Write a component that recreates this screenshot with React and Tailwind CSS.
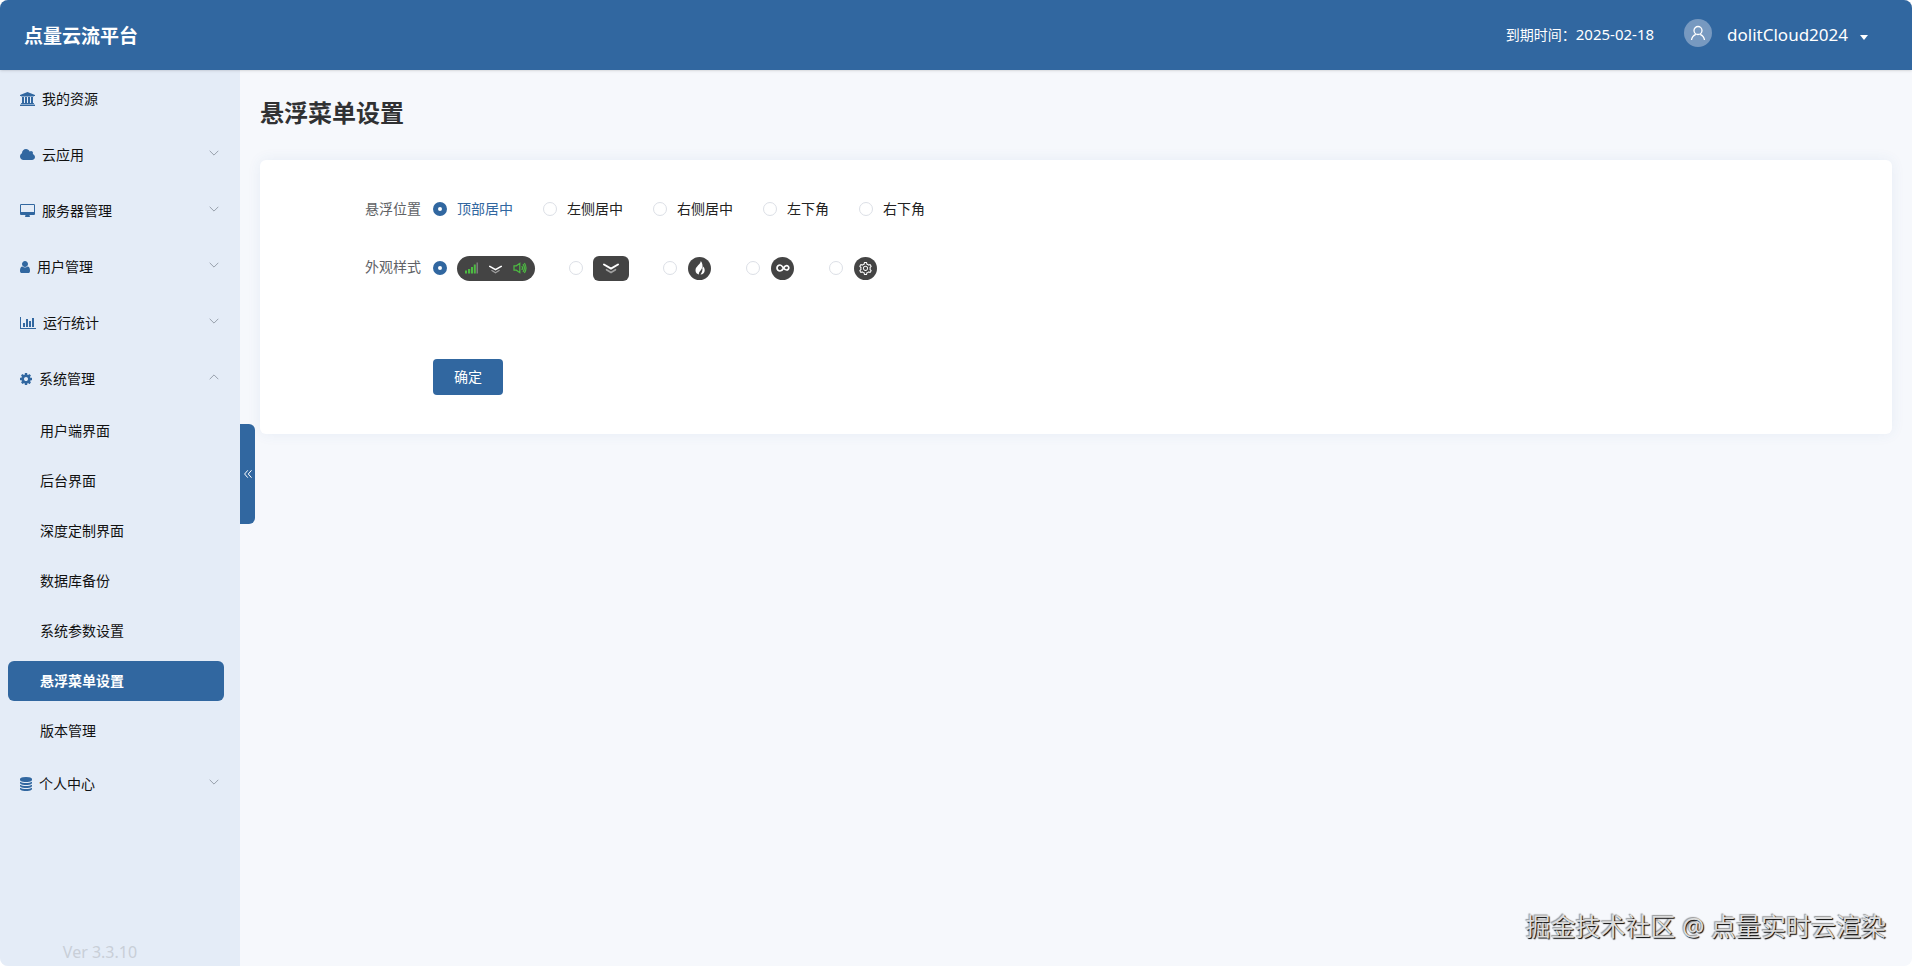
import { useState } from "react";
import { AiOutlineSetting } from "react-icons/ai";

const icons = {
  bank: {
    box: "0 0 1920 1792",
    size: "w-[15px]",
    d: "M960 0l960 384v128h-128q0 26-20.5 45t-48.5 19h-1526q-28 0-48.5-19t-20.5-45h-128v-128zm-704 640h256v768h128v-768h256v768h128v-768h256v768h128v-768h256v768h59q28 0 48.5 19t20.5 45v64h-1664v-64q0-26 20.5-45t48.5-19h59v-768zm1595 960q28 0 48.5 19t20.5 45v128h-1920v-128q0-26 20.5-45t48.5-19h1782z",
  },
  cloud: {
    box: "64 0 1920 1792",
    size: "w-[15px]",
    d: "M1984 1152q0 159-112.5 271.5t-271.5 112.5h-1088q-185 0-316.5-131.5t-131.5-316.5q0-132 71-241.5t187-163.5q-2-28-2-43 0-212 150-362t362-150q158 0 286.5 88t187.5 230q70-62 166-62 106 0 181 75t75 181q0 75-41 138 129 30 213 134.5t84 239.5z",
  },
  desktop: {
    box: "0 0 1920 1792",
    size: "w-[15px]",
    d: "M1792 992v-832q0-13-9.5-22.5t-22.5-9.5h-1600q-13 0-22.5 9.5t-9.5 22.5v832q0 13 9.5 22.5t22.5 9.5h1600q13 0 22.5-9.5t9.5-22.5zm128-832v1088q0 66-47 113t-113 47h-544q0 37 16 77.5t32 71 16 43.5q0 26-19 45t-45 19h-512q-26 0-45-19t-19-45q0-14 16-44t32-70 16-78h-544q-66 0-113-47t-47-113v-1088q0-66 47-113t113-47h1600q66 0 113 47t47 113z",
  },
  user: {
    box: "256 0 1280 1792",
    size: "w-2.5",
    d: "M1536 1399q0 109-62.5 187t-150.5 78h-854q-88 0-150.5-78t-62.5-187q0-85 8.5-160.5t31.5-152 58.5-131 94-89 134.5-34.5q131 128 313 128t313-128q76 0 134.5 34.5t94 89 58.5 131 31.5 152 8.5 160.5zm-256-887q0 159-112.5 271.5t-271.5 112.5-271.5-112.5-112.5-271.5 112.5-271.5 271.5-112.5 271.5 112.5 112.5 271.5z",
  },
  chart: {
    box: "0 0 2048 1792",
    size: "w-4",
    d: "M640 896v512h-256v-512h256zm384-512v1024h-256v-1024h256zm1024 1152v128h-2048v-1536h128v1408h1920zm-640-896v768h-256v-768h256zm384-384v1152h-256v-1152h256z",
  },
  cog: {
    box: "128 0 1536 1792",
    size: "w-3",
    d: "M1152 896q0-106-75-181t-181-75-181 75-75 181 75 181 181 75 181-75 75-181zm512-109v222q0 12-8 23t-20 13l-185 28q-19 54-39 91 35 50 107 138 10 12 10 25t-9 23q-27 37-99 108t-94 71q-12 0-26-9l-138-108q-44 23-91 38-16 136-29 186-7 28-36 28h-222q-14 0-24.5-8.5t-11.5-21.5l-28-184q-49-16-90-37l-141 107q-10 9-25 9-14 0-25-11-126-114-165-168-7-10-7-23 0-12 8-23 15-21 51-66.5t54-70.5q-27-50-41-99l-183-27q-13-2-21-12.5t-8-23.5v-222q0-12 8-23t19-13l186-28q14-46 39-92-40-57-107-138-10-12-10-24 0-10 9-23 26-36 98.5-107.5t94.5-71.5q13 0 26 10l138 107q44-23 91-38 16-136 29-186 7-28 36-28h222q14 0 24.5 8.5t11.5 21.5l28 184q49 16 90 37l142-107q9-9 24-9 13 0 25 10 129 119 165 170 7 8 7 22 0 12-8 23-15 21-51 66.5t-54 70.5q26 50 41 98l183 28q13 2 21 12.5t8 23.5z",
  },
  database: {
    box: "128 0 1536 1792",
    size: "w-3",
    d: "M896 768q237 0 443-43t325-127v170q0 69-103 128t-280 93.5-385 34.5-385-34.5-280-93.5-103-128v-170q119 84 325 127t443 43zm0 768q237 0 443-43t325-127v170q0 69-103 128t-280 93.5-385 34.5-385-34.5-280-93.5-103-128v-170q119 84 325 127t443 43zm0-384q237 0 443-43t325-127v170q0 69-103 128t-280 93.5-385 34.5-385-34.5-280-93.5-103-128v-170q119 84 325 127t443 43zm0-1152q208 0 385 34.5t280 93.5 103 128v128q0 69-103 128t-280 93.5-385 34.5-385-34.5-280-93.5-103-128v-128q0-69 103-128t280-93.5 385-34.5z",
  },
};

const menu = [
  { icon: "bank", label: "我的资源" },
  { icon: "cloud", label: "云应用", children: [] },
  { icon: "desktop", label: "服务器管理", children: [] },
  { icon: "user", label: "用户管理", children: [] },
  { icon: "chart", label: "运行统计", children: [] },
  {
    icon: "cog",
    label: "系统管理",
    children: ["用户端界面", "后台界面", "深度定制界面", "数据库备份", "系统参数设置", "悬浮菜单设置", "版本管理"],
  },
  { icon: "database", label: "个人中心", children: [] },
];

const positions = ["顶部居中", "左侧居中", "右侧居中", "左下角", "右下角"];

function MenuIcon({ name }) {
  const icon = icons[name];
  return (
    <svg viewBox={icon.box} className={`h-3.5 shrink-0 fill-[#3167a0] ${icon.size}`} aria-hidden="true">
      <path d={icon.d} />
    </svg>
  );
}

function Arrow({ open }) {
  return (
    <svg viewBox="0 0 10 6" className="mb-1 ml-auto h-1.5 w-2.5 fill-none stroke-[#8f97a3]" aria-hidden="true">
      <path d={open ? "M.7 5.2L5 .9l4.3 4.3" : "M.7 .8L5 5.1l4.3-4.3"} strokeWidth="0.9" />
    </svg>
  );
}

function DoubleChevron({ className }) {
  return (
    <svg viewBox="0 0 16 12" className={`fill-none ${className}`} aria-hidden="true">
      <path d="M1 1.5l7 4 7-4" stroke="#fff" strokeWidth="2" strokeLinecap="round" />
      <path d="M3.5 6.7l4.5 2.8 4.5-2.8" stroke="#a0a0a0" strokeWidth="1.6" strokeLinecap="round" />
    </svg>
  );
}

function BarPreview() {
  return (
    <span className="flex h-[25px] w-[78px] items-center justify-between rounded-full bg-[#444] px-2">
      <svg viewBox="0 0 13 12" className="h-3 w-[13px] fill-[#4dbb42]" aria-hidden="true">
        <path d="M0 8.5h2v3H0zM3 7h2.2v4.500H3zM6 5h2v6.500H6zM8.800 2.500h2v9h-2z" />
        <path d="M11.5 .5H13v11h-1.500z" fill="#7b7b7b" />
      </svg>
      <DoubleChevron className="mt-1 h-2.5 w-[13px]" />
      <svg viewBox="0 0 14 12" className="h-3 w-3.5 fill-none stroke-[#4dbb42]" strokeWidth="1.2" aria-hidden="true">
        <path d="M1 3.8h2.3L6.8 1.3v9.4L3.3 8.2H1z" />
        <path d="M8.8 4q1.4 2 0 4M10 2.2q2.8 3.8 0 7.6M11.4 1q3.2 5 0 10" />
      </svg>
    </span>
  );
}

function SquarePreview() {
  return (
    <span className="flex h-[25px] w-9 items-center justify-center rounded-md bg-[#444]">
      <DoubleChevron className="mt-0.5 h-3 w-4" />
    </span>
  );
}

function RoundPreview({ children }) {
  return (
    <span className="flex w-[25px] justify-center">
      <span className="flex size-[23px] items-center justify-center rounded-full bg-[#444]">{children}</span>
    </span>
  );
}

const styles = [
  { label: "状态栏", preview: <BarPreview /> },
  { label: "下拉", preview: <SquarePreview /> },
  {
    label: "火焰",
    preview: (
      <RoundPreview>
        <svg viewBox="0 0 14 14" className="size-3.5" aria-hidden="true">
          <path d="M7.8 0C7.9 3 2.500 5.300 2.500 9.300c0 2.500 1.600 4 3.600 4.300-1-2.600 2.400-4 3.100-7.100.9 2.700-.3 5.200-1.700 7.100 2.600-.2 4.200-2 4.200-4.400 0-1.700-.6-2.800-1.300-3.800-.1.800-.4 1.300-.9 1.700C9.800 4.500 9.400 1.700 7.800 0z" fill="#fff" />
        </svg>
      </RoundPreview>
    ),
  },
  {
    label: "无限",
    preview: (
      <RoundPreview>
        <svg viewBox="0 0 14 8" className="h-2 w-3.5 fill-none" aria-hidden="true">
          <path d="M7.3 4.5C6.5 6 5.5 7 4 7a3 3 0 1 1 0-6c2.7 0 3.6 5 6.6 5a2.2 2.2 0 1 0 0-4.4C9 1.6 8.2 3 7.3 4.5z" stroke="#fff" strokeWidth="1.7" />
        </svg>
      </RoundPreview>
    ),
  },
  {
    label: "齿轮",
    preview: (
      <RoundPreview>
        <AiOutlineSetting className="size-[15px] text-white" aria-hidden="true" />
      </RoundPreview>
    ),
  },
];

function Radio({ name, checked, onChange, label, children }) {
  return (
    <label className="flex cursor-pointer items-center gap-2.5">
      <input
        type="radio"
        name={name}
        checked={checked}
        onChange={onChange}
        aria-label={label}
        className="size-3.5 appearance-none rounded-full border border-[#dcdfe6] bg-white checked:border-5 checked:border-[#3167a0]"
      />
      {children}
    </label>
  );
}

function Header() {
  return (
    <header className="z-10 flex h-[70px] items-center bg-[#3167a0] px-6 text-white shadow-sm">
      <h1 className="pt-0.5 text-[19px] font-bold">点量云流平台</h1>
      <span className="ml-auto text-sm">
        到期时间：<span className="text-[15px]">2025-02-18</span>
      </span>
      <button type="button" className="mr-5 ml-[30px] flex items-center text-[17px]">
        <span className="mr-[15px] mb-1 flex size-7 items-center justify-center rounded-full bg-[#7799c0]">
          <svg viewBox="0 0 16 16" className="size-4 fill-none stroke-white" strokeWidth="1.3" aria-hidden="true">
            <circle cx="8" cy="5.5" r="4" />
            <path d="M1.5 15c.4-3 2-4.7 4.3-5.7M14.5 15c-.4-3-2-4.7-4.3-5.7" />
          </svg>
        </span>
        dolitCloud2024
        <svg viewBox="0 0 8 5" className="mt-1 ml-3 h-[5px] w-2 fill-white" aria-hidden="true">
          <path d="M0 0h8L4 5z" />
        </svg>
      </button>
    </header>
  );
}

function Sidebar() {
  const [open, setOpen] = useState("系统管理");
  const [active, setActive] = useState("悬浮菜单设置");

  return (
    <aside className="relative flex w-60 shrink-0 flex-col bg-[#e4ecf7]">
      <nav className="pt-px text-sm text-[#111]">
        {menu.map((item) => (
          <div key={item.label}>
            {item.children ? (
              <button
                type="button"
                aria-expanded={open === item.label}
                onClick={() => setOpen(open === item.label ? "" : item.label)}
                className="flex h-14 w-full items-center gap-[7px] pr-[21px] pl-5"
              >
                <MenuIcon name={item.icon} />
                {item.label}
                <Arrow open={open === item.label} />
              </button>
            ) : (
              <a href="#" className="flex h-14 items-center gap-[7px] px-5">
                <MenuIcon name={item.icon} />
                {item.label}
              </a>
            )}
            {open === item.label && item.children?.length > 0 && (
              <div className="flex flex-col gap-2.5 pt-1 pr-4 pb-[5px] pl-2">
                {item.children.map((child) => (
                  <a
                    key={child}
                    href="#"
                    onClick={() => setActive(child)}
                    className={`flex h-10 items-center rounded-md pl-8 ${
                      active === child ? "bg-[#3167a0] font-bold text-white" : ""
                    }`}
                  >
                    {child}
                  </a>
                ))}
              </div>
            )}
          </div>
        ))}
      </nav>
      <p className="mt-auto pr-10 text-center text-base leading-7 text-[#c9cfd8]">Ver 3.3.10</p>
      <button
        type="button"
        aria-label="收起菜单"
        className="absolute top-[354px] left-full flex h-[100px] w-[15px] items-center justify-center rounded-r-md bg-[#3167a0]"
      >
        <svg viewBox="0 0 8 8" className="size-2 fill-none stroke-white" strokeWidth="1" aria-hidden="true">
          <path d="M3.8 .3L.6 4l3.2 3.7M7.5 .3L4.3 4l3.2 3.7" />
        </svg>
      </button>
    </aside>
  );
}

function FloatMenuForm() {
  const [position, setPosition] = useState(0);
  const [style, setStyle] = useState(0);

  return (
    <form className="rounded-md bg-white pt-[29px] pb-[39px] text-sm shadow-[0_0_14px_rgba(49,103,160,0.08)]">
      <div role="radiogroup" aria-labelledby="position" className="mb-[19px] flex h-10 items-center">
        <span id="position" className="w-[161px] text-right text-[#606266]">悬浮位置</span>
        <div className="ml-3 flex gap-[30px]">
          {positions.map((text, i) => (
            <Radio key={text} name="position" checked={position === i} onChange={() => setPosition(i)}>
              <span className={position === i ? "text-[#3167a0]" : "text-[#222]"}>{text}</span>
            </Radio>
          ))}
        </div>
      </div>
      <div role="radiogroup" aria-labelledby="style" className="flex h-10 items-center">
        <span id="style" className="w-[161px] pb-0.5 text-right text-[#606266]">外观样式</span>
        <div className="ml-3 flex gap-[34px]">
          {styles.map((item, i) => (
            <Radio key={item.label} name="style" label={item.label} checked={style === i} onChange={() => setStyle(i)}>
              {item.preview}
            </Radio>
          ))}
        </div>
      </div>
      <button type="button" className="mt-[71px] ml-[173px] h-9 w-[70px] rounded bg-[#3167a0] text-white">
        确定
      </button>
    </form>
  );
}

function App() {
  return (
    <div className="relative flex min-h-screen flex-col overflow-hidden rounded-lg bg-[#f6f8fc] font-['Noto_Sans','Noto_Sans_CJK_SC',sans-serif]">
      <Header />
      <div className="flex flex-1">
        <Sidebar />
        <main className="flex-1 px-5">
          <h2 className="flex h-[90px] items-center pb-1 text-2xl font-bold text-[#303133]">悬浮菜单设置</h2>
          <FloatMenuForm />
        </main>
      </div>
      <p className="absolute right-[26px] bottom-[21px] text-[25px] text-[#dcdcdc] [text-shadow:1px_1px_1px_#000,-1px_-1px_1px_#999]">
        掘金技术社区 @ 点量实时云渲染
      </p>
    </div>
  );
}

export default App;
